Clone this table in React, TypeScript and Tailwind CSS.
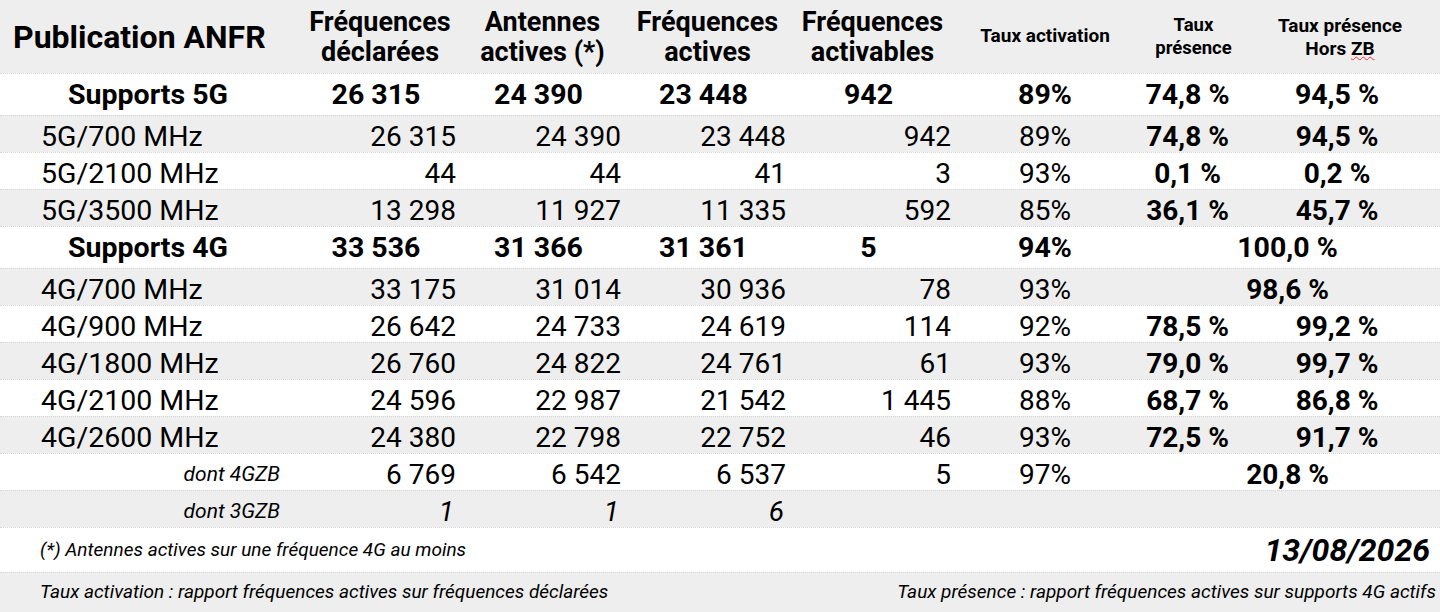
import React from "react";

const cols = "grid grid-cols-[300px_160px_165px_165px_165px_180px_105px_200px]";

type Row = {
  label: string;
  vals: string[];
  act: string;
  pres?: string;
  hors?: string;
  merged?: string;
  bg: string;
};

const rows5G: Row[] = [
  { label: "5G/700 MHz", vals: ["26 315", "24 390", "23 448", "942"], act: "89%", pres: "74,8 %", hors: "94,5 %", bg: "bg-[#eeeeee]" },
  { label: "5G/2100 MHz", vals: ["44", "44", "41", "3"], act: "93%", pres: "0,1 %", hors: "0,2 %", bg: "bg-white" },
  { label: "5G/3500 MHz", vals: ["13 298", "11 927", "11 335", "592"], act: "85%", pres: "36,1 %", hors: "45,7 %", bg: "bg-[#eeeeee]" },
];

const rows4G: Row[] = [
  { label: "4G/700 MHz", vals: ["33 175", "31 014", "30 936", "78"], act: "93%", merged: "98,6 %", bg: "bg-[#eeeeee]" },
  { label: "4G/900 MHz", vals: ["26 642", "24 733", "24 619", "114"], act: "92%", pres: "78,5 %", hors: "99,2 %", bg: "bg-white" },
  { label: "4G/1800 MHz", vals: ["26 760", "24 822", "24 761", "61"], act: "93%", pres: "79,0 %", hors: "99,7 %", bg: "bg-[#eeeeee]" },
  { label: "4G/2100 MHz", vals: ["24 596", "22 987", "21 542", "1 445"], act: "88%", pres: "68,7 %", hors: "86,8 %", bg: "bg-white" },
  { label: "4G/2600 MHz", vals: ["24 380", "22 798", "22 752", "46"], act: "93%", pres: "72,5 %", hors: "91,7 %", bg: "bg-[#eeeeee]" },
];

function BandRow({ r }: { r: Row }) {
  return (
    <div className={`${cols} h-[37px] items-center border-t border-dotted border-[#d6d6d6] text-[28px] ${r.bg}`}>
      <div className="pl-[41px] text-[28.5px]">{r.label}</div>
      {r.vals.map((v, i) => (
        <div key={i} className="pr-[4px] text-right">
          {v}
        </div>
      ))}
      <div className="text-center">{r.act}</div>
      {r.merged ? (
        <div className="col-span-2 text-center font-bold">{r.merged}</div>
      ) : (
        <>
          <div className="text-center font-bold">{r.pres}</div>
          <div className="pr-[6px] text-center font-bold">{r.hors}</div>
        </>
      )}
    </div>
  );
}

function GroupRow({ label, vals, act, pres, hors, merged }: { label: string; vals: string[]; act: string; pres?: string; hors?: string; merged?: string }) {
  return (
    <div className={`${cols} h-[42px] items-center border-t border-dotted border-[#d6d6d6] bg-white text-[28.5px] font-bold`}>
      <div className="pr-[4px] text-center">{label}</div>
      {vals.map((v, i) => (
        <div key={i} className="pr-[8px] text-center">
          {v}
        </div>
      ))}
      <div className="text-center">{act}</div>
      {merged ? (
        <div className="col-span-2 text-center">{merged}</div>
      ) : (
        <>
          <div className="text-center">{pres}</div>
          <div className="pr-[6px] text-center">{hors}</div>
        </>
      )}
    </div>
  );
}

export default function App() {
  return (
    <div className="w-[1440px] h-[612px] overflow-hidden bg-white font-[Roboto,sans-serif] text-black">
      <div className={`${cols} h-[73px] items-center bg-[#eeeeee] font-bold`}>
        <div className="pl-[13px] text-[32px]">Publication ANFR</div>
        <div className="text-center text-[27px] leading-[30px]">
          Fréquences
          <br />
          déclarées
        </div>
        <div className="text-center text-[27px] leading-[30px]">
          Antennes
          <br />
          actives (*)
        </div>
        <div className="text-center text-[27px] leading-[30px]">
          Fréquences
          <br />
          actives
        </div>
        <div className="text-center text-[27px] leading-[30px]">
          Fréquences
          <br />
          activables
        </div>
        <div className="text-center text-[19px]">Taux activation</div>
        <div className="pl-[12px] text-center text-[18.5px] leading-[23px]">
          Taux
          <br />
          présence
        </div>
        <div className="text-center text-[19px] leading-[23px]">
          Taux présence
          <br />
          Hors <span className="underline decoration-wavy decoration-red-500 decoration-1">ZB</span>
        </div>
      </div>

      <GroupRow label="Supports 5G" vals={["26 315", "24 390", "23 448", "942"]} act="89%" pres="74,8 %" hors="94,5 %" />
      {rows5G.map((r) => (
        <BandRow key={r.label} r={r} />
      ))}

      <GroupRow label="Supports 4G" vals={["33 536", "31 366", "31 361", "5"]} act="94%" merged="100,0 %" />
      {rows4G.map((r) => (
        <BandRow key={r.label} r={r} />
      ))}

      <div className={`${cols} h-[37px] items-center border-t border-dotted border-[#d6d6d6] bg-white text-[28px]`}>
        <div className="pr-[20px] text-right text-[21px] italic">dont 4GZB</div>
        <div className="pr-[4px] text-right">6 769</div>
        <div className="pr-[4px] text-right">6 542</div>
        <div className="pr-[4px] text-right">6 537</div>
        <div className="pr-[4px] text-right">5</div>
        <div className="text-center">97%</div>
        <div className="col-span-2 text-center font-bold">20,8 %</div>
      </div>
      <div className={`${cols} h-[37px] items-center border-t border-dotted border-[#d6d6d6] bg-[#eeeeee] text-[28px] italic`}>
        <div className="pr-[20px] text-right text-[21px]">dont 3GZB</div>
        <div className="pr-[6px] text-right">1</div>
        <div className="pr-[6px] text-right">1</div>
        <div className="pr-[6px] text-right">6</div>
        <div />
        <div />
        <div />
        <div />
      </div>

      <div className="flex h-[45px] items-center justify-between border-t border-dotted border-[#d6d6d6] bg-white pl-[40px] pr-[10px] italic">
        <span className="text-[19px]">(*) Antennes actives sur une fréquence 4G au moins</span>
        <span className="text-[32px] font-bold">13/08/2026</span>
      </div>
      <div className="flex h-[40px] items-center justify-between border-t border-dotted border-[#d6d6d6] bg-[#eeeeee] pl-[40px] pr-[4px] text-[19px] italic">
        <span>Taux activation : rapport fréquences actives sur fréquences déclarées</span>
        <span>Taux présence : rapport fréquences actives sur supports 4G actifs</span>
      </div>
    </div>
  );
}
